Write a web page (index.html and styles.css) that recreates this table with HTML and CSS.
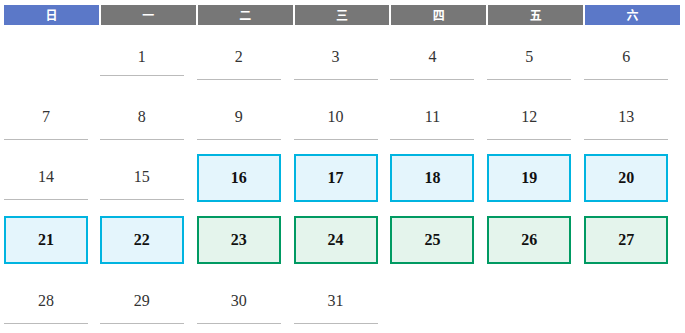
FILE: index.html
```html
<!DOCTYPE html>
<html lang="zh">
<head>
  <meta charset="UTF-8">
  <title>日历</title>
  <link rel="stylesheet" href="styles.css">
</head>
<body>

  <div class="calendar">
    <div class="weekdays">
      <div class="wd weekend">日</div>
      <div class="wd">一</div>
      <div class="wd">二</div>
      <div class="wd">三</div>
      <div class="wd">四</div>
      <div class="wd">五</div>
      <div class="wd weekend">六</div>
    </div>

    <div class="days">
      <div class="blank"></div>
      <div class="day first">1</div>
      <div class="day">2</div>
      <div class="day">3</div>
      <div class="day">4</div>
      <div class="day">5</div>
      <div class="day">6</div>

      <div class="day">7</div>
      <div class="day">8</div>
      <div class="day">9</div>
      <div class="day">10</div>
      <div class="day">11</div>
      <div class="day">12</div>
      <div class="day">13</div>

      <div class="day">14</div>
      <div class="day">15</div>
      <div class="day mark blue">16</div>
      <div class="day mark blue">17</div>
      <div class="day mark blue">18</div>
      <div class="day mark blue">19</div>
      <div class="day mark blue">20</div>

      <div class="day mark blue">21</div>
      <div class="day mark blue">22</div>
      <div class="day mark green">23</div>
      <div class="day mark green">24</div>
      <div class="day mark green">25</div>
      <div class="day mark green">26</div>
      <div class="day mark green">27</div>

      <div class="day">28</div>
      <div class="day">29</div>
      <div class="day">30</div>
      <div class="day">31</div>
    </div>
  </div>

</body>
</html>
```

FILE: styles.css
```css
* {
  box-sizing: border-box;
}
body {
  margin: 0;
  padding: 5px 5px 0 4px;
  background: #fff;
  font-family: "Liberation Serif", "Times New Roman", serif;
}
.weekdays, .days {
  display: grid;
  grid-template-columns: repeat(7, 1fr);
  column-gap: 2px;
}
.weekdays {
  margin-bottom: 9px;
}
.wd {
  height: 20px;
  line-height: 20px;
  text-align: center;
  background-color: #777;
  color: #fff;
  font-family: "Noto Sans CJK SC", "Liberation Sans", sans-serif;
  font-size: 12px;
  font-weight: bold;
}
.wd.weekend {
  background-color: #5b78c8;
}
.days {
  row-gap: 14px;
  align-items: start;
}
.day {
  width: 84px;
  height: 46px;
  margin-left: -1px;
  display: flex;
  align-items: center;
  justify-content: center;
  font-size: 16px;
  color: #333;
  border-bottom: 1px solid #bbb;
}
.day:nth-child(7n+1) {
  margin-left: 0;
}
.day.first {
  height: 42px;
  padding-top: 5px;
}
.mark {
  height: 48px;
  font-weight: bold;
  color: #111;
}
.blue {
  border: 2px solid #00b4e0;
  background-color: #e4f5fc;
}
.green {
  border: 2px solid #009a62;
  background-color: #e4f4ec;
}
```
